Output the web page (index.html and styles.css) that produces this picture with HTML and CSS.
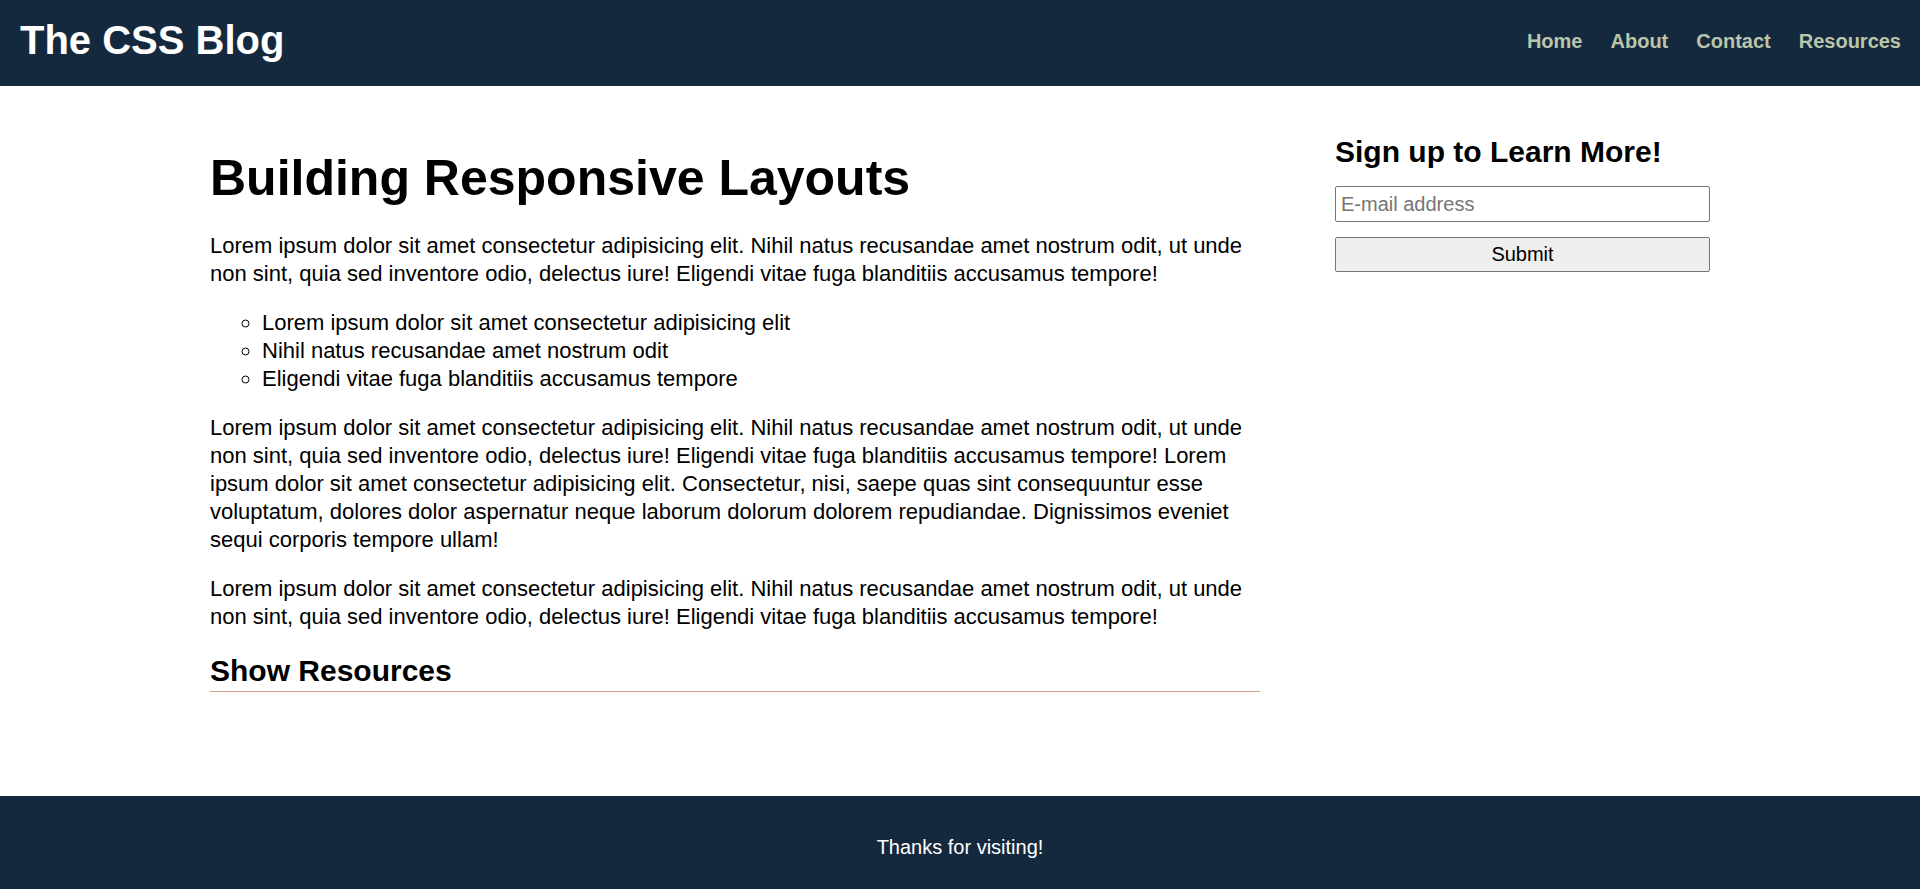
FILE: index.html
```html
<!DOCTYPE html>
<html lang="en">
<head>
<meta charset="utf-8">
<title>The CSS Blog</title>
<link rel="stylesheet" href="styles.css">
</head>
<body>
<header class="site-header">
  <h1 class="logo">The CSS Blog</h1>
  <nav class="nav">
    <a href="#" class="nav-link">Home</a>
    <a href="#" class="nav-link">About</a>
    <a href="#" class="nav-link">Contact</a>
    <a href="#" class="nav-link">Resources</a>
  </nav>
</header>

<div class="layout">
  <main class="main">
    <h1 class="title">Building Responsive Layouts</h1>
    <p class="text">Lorem ipsum dolor sit amet consectetur adipisicing elit. Nihil natus recusandae amet nostrum odit, ut unde non sint, quia sed inventore odio, delectus iure! Eligendi vitae fuga blanditiis accusamus tempore!</p>
    <ul class="list">
      <li>Lorem ipsum dolor sit amet consectetur adipisicing elit</li>
      <li>Nihil natus recusandae amet nostrum odit</li>
      <li>Eligendi vitae fuga blanditiis accusamus tempore</li>
    </ul>
    <p class="text">Lorem ipsum dolor sit amet consectetur adipisicing elit. Nihil natus recusandae amet nostrum odit, ut unde non sint, quia sed inventore odio, delectus iure! Eligendi vitae fuga blanditiis accusamus tempore! Lorem ipsum dolor sit amet consectetur adipisicing elit. Consectetur, nisi, saepe quas sint consequuntur esse voluptatum, dolores dolor aspernatur neque laborum dolorum dolorem repudiandae. Dignissimos eveniet sequi corporis tempore ullam!</p>
    <p class="text">Lorem ipsum dolor sit amet consectetur adipisicing elit. Nihil natus recusandae amet nostrum odit, ut unde non sint, quia sed inventore odio, delectus iure! Eligendi vitae fuga blanditiis accusamus tempore!</p>
    <h2 class="resources">Show Resources</h2>
  </main>
  <aside class="sidebar">
    <h2 class="sidebar-title">Sign up to Learn More!</h2>
    <form class="signup">
      <input class="email" type="email" placeholder="E-mail address">
      <button class="submit" type="button">Submit</button>
    </form>
  </aside>
</div>

<footer class="site-footer">
  <p class="footer-text">Thanks for visiting!</p>
</footer>
</body>
</html>
```

FILE: styles.css
```css
* {
  box-sizing: border-box;
}

html, body {
  margin: 0;
  padding: 0;
}

body {
  font-family: "Liberation Sans", Arial, sans-serif;
  font-size: 20px;
  color: #000;
  background: #fff;
}

.site-header {
  background: #14293e;
  height: 86px;
  padding: 17px 19px 23px 20px;
  display: flex;
  align-items: center;
  justify-content: space-between;
}

.logo {
  margin: 0;
  font-size: 40px;
  font-weight: bold;
  line-height: normal;
  color: #fff;
}

.nav {
  display: flex;
  gap: 28px;
  padding-top: 2px;
}

.nav-link {
  color: #bac5a9;
  font-weight: bold;
  font-size: 20px;
  text-decoration: none;
}

.layout {
  max-width: 1500px;
  margin: 0 auto;
  padding: 38px 0 84px;
  display: flex;
  gap: 75px;
  align-items: flex-start;
}

.main {
  flex: 0 0 1050px;
}

.sidebar {
  flex: 0 0 375px;
}

.title {
  font-size: 50px;
  font-weight: bold;
  line-height: normal;
  margin: 25px 0;
}

.text {
  font-size: 22px;
  line-height: 28px;
  margin: 21px 0;
}

.list {
  font-size: 22px;
  line-height: 28px;
  margin: 21px 0;
  padding-left: 52px;
  list-style: circle;
}

.resources {
  font-size: 30px;
  font-weight: bold;
  line-height: normal;
  margin: 23px 0 20px;
  padding-bottom: 3px;
  border-bottom: 1px solid #d9a07d;
}

.sidebar-title {
  font-size: 30px;
  font-weight: bold;
  line-height: normal;
  margin: 11px 0 17px;
}

.signup {
  display: flex;
  flex-direction: column;
  gap: 15px;
}

.email {
  height: 36px;
  width: 100%;
  font-family: "Liberation Sans", Arial, sans-serif;
  font-size: 20px;
  padding: 0 5px;
  border: 1px solid #767676;
  border-radius: 2px;
  color: #000;
}

.email::placeholder {
  color: #757575;
}

.submit {
  height: 35px;
  width: 100%;
  font-family: "Liberation Sans", Arial, sans-serif;
  font-size: 20px;
  color: #000;
  background: #efefef;
  border: 1px solid #767676;
  border-radius: 2px;
}

.site-footer {
  background: #14293e;
  padding: 40px 20px;
  text-align: center;
}

.footer-text {
  margin: 0;
  color: #fff;
  font-size: 20px;
  line-height: normal;
}
```
